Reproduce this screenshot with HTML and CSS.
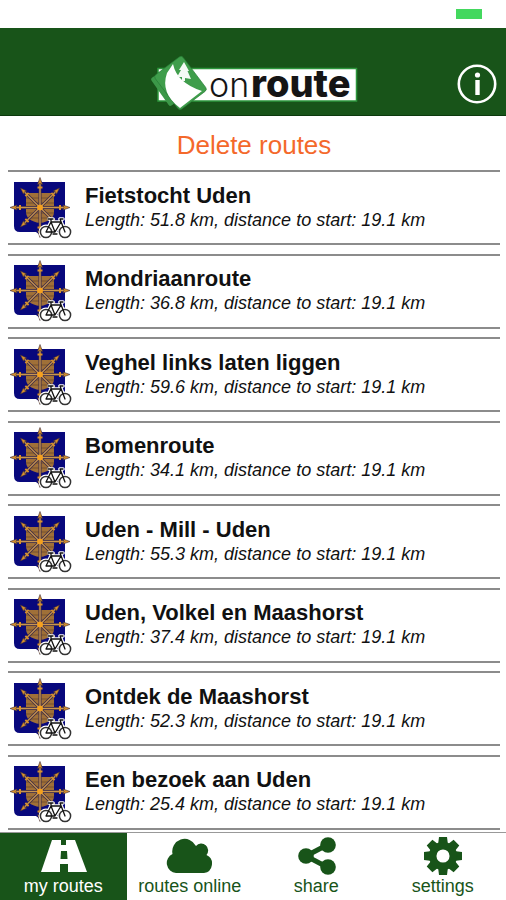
FILE: index.html
```html
<!DOCTYPE html>
<html lang="en">

    <head>
        <meta charset="UTF-8">
        <meta name="viewport" content="width=device-width, initial-scale=1.0">
        <title>My routes</title>

        <link rel="stylesheet" href="styles.css">
    </head>

    <body>
        <!-- shared route icon: coat of arms with a bicycle -->
        <svg class="sprite" width="0" height="0" aria-hidden="true">
            <defs>
                <g id="arrow">
                    <path d="M0 0V-26" stroke="#3a2a48" stroke-width="3"/>
                    <path d="M0 0V-26" stroke="#c9954f" stroke-width="1.4"/>
                    <path d="M0 -30L2.500 -23L0 -24L-2.500 -23Z" fill="#d8912c" stroke="#3a2a3c" stroke-width=".6"/>
                    <path d="M-2.500 -20H2.500" stroke="#d8912c" stroke-width="2"/>
                </g>
                <symbol id="route-icon" viewBox="0 0 66 68">
                    <path d="M6 8H57V54Q57 58 52 58H36L32 61L28 58H12Q6 58 6 52Z" fill="#08087c"/>
                    <path d="M18 19H46V38Q46 47 32 49Q18 47 18 38Z" fill="#a07038"/>
                    <path d="M18 24H46M18 29H46M18 34H46M18 39H46M21 44H43" stroke="#74502f" stroke-width="1"/>
                    <use href="#arrow" transform="translate(32 33.500)"/>
                    <use href="#arrow" transform="translate(32 33.500) rotate(45) scale(.92)"/>
                    <use href="#arrow" transform="translate(32 33.500) rotate(90)"/>
                    <use href="#arrow" transform="translate(32 33.500) rotate(135) scale(.92)"/>
                    <use href="#arrow" transform="translate(32 33.500) rotate(180)"/>
                    <use href="#arrow" transform="translate(32 33.500) rotate(225) scale(.92)"/>
                    <use href="#arrow" transform="translate(32 33.500) rotate(270)"/>
                    <use href="#arrow" transform="translate(32 33.500) rotate(315) scale(.92)"/>
                    <circle cx="32" cy="33.500" r="3" fill="#f5a01e"/>
                    <g fill="none" stroke-linecap="round" stroke-linejoin="round">
                        <g stroke="#fff" stroke-width="3.6">
                            <circle cx="38" cy="58" r="5.600"/>
                            <circle cx="57" cy="58" r="5.600"/>
                            <path d="M38 58L43 48H53L47 58H38M43 48L47 58M57 58L52 45H55M41 45H45M43 45V48"/>
                        </g>
                        <path d="M43 48H53L47 58Z" fill="#fff"/>
                        <circle cx="38" cy="58" r="5.600" fill="#fff" stroke="#333" stroke-width="1.500"/>
                        <circle cx="57" cy="58" r="5.600" fill="#fff" stroke="#333" stroke-width="1.500"/>
                        <path d="M38 58L43 48H53L47 58H38M43 48L47 58M57 58L52 45H55M40 45H45M43 45V48M45 60H49" stroke="#111" stroke-width="1.300"/>
                    </g>
                </symbol>
            </defs>
        </svg>

        <div class="status-bar"><span class="battery"></span></div>

        <header class="header">
            <svg class="logo" viewBox="0 0 210 60" role="img" aria-label="onroute">
                <path d="M10 15.500H208.500V48H10Z" fill="#fff" stroke="#2c963c" stroke-width="1.500"/>
                <rect x="9" y="13" width="34" height="34" rx="2" fill="#3c9848" transform="rotate(-35 26 30)"/>
                <rect x="15" y="8.500" width="35" height="43" rx="3" fill="#3f9d4b" stroke="#247a34" stroke-width=".6" transform="rotate(-37 32.500 30)"/>
                <path d="M19 20L25 11Q29 30 54 38L32 55Q12 40 19 20Z" fill="#fff"/>
                <path d="M36 9L31 17H33L29 24H34V28H37V25L43 26L39.500 18H41Z" fill="#f4faf4"/>
                <text class="logo-on" x="61" y="44">on</text>
                <text class="logo-route" x="103" y="44">route</text>
            </svg>
            <button class="info" type="button" aria-label="Info">
                <svg viewBox="0 0 40 40">
                    <circle cx="20" cy="20" r="18.200" fill="none" stroke="#fff" stroke-width="2.600"/>
                    <circle cx="20.500" cy="11" r="2.600" fill="#fff"/>
                    <path d="M20.500 16V31" stroke="#fff" stroke-width="4.400"/>
                </svg>
            </button>
        </header>

        <main class="content">
            <button class="delete" type="button">Delete routes</button>

            <ul class="routes">
                <li class="route">
                    <svg class="route-icon"><use href="#route-icon"/></svg>
                    <div>
                        <h2>Fietstocht Uden</h2>
                        <p>Length: 51.8 km, distance to start: 19.1 km</p>
                    </div>
                </li>
                <li class="route">
                    <svg class="route-icon"><use href="#route-icon"/></svg>
                    <div>
                        <h2>Mondriaanroute</h2>
                        <p>Length: 36.8 km, distance to start: 19.1 km</p>
                    </div>
                </li>
                <li class="route">
                    <svg class="route-icon"><use href="#route-icon"/></svg>
                    <div>
                        <h2>Veghel links laten liggen</h2>
                        <p>Length: 59.6 km, distance to start: 19.1 km</p>
                    </div>
                </li>
                <li class="route">
                    <svg class="route-icon"><use href="#route-icon"/></svg>
                    <div>
                        <h2>Bomenroute</h2>
                        <p>Length: 34.1 km, distance to start: 19.1 km</p>
                    </div>
                </li>
                <li class="route">
                    <svg class="route-icon"><use href="#route-icon"/></svg>
                    <div>
                        <h2>Uden - Mill - Uden</h2>
                        <p>Length: 55.3 km, distance to start: 19.1 km</p>
                    </div>
                </li>
                <li class="route">
                    <svg class="route-icon"><use href="#route-icon"/></svg>
                    <div>
                        <h2>Uden, Volkel en Maashorst</h2>
                        <p>Length: 37.4 km, distance to start: 19.1 km</p>
                    </div>
                </li>
                <li class="route">
                    <svg class="route-icon"><use href="#route-icon"/></svg>
                    <div>
                        <h2>Ontdek de Maashorst</h2>
                        <p>Length: 52.3 km, distance to start: 19.1 km</p>
                    </div>
                </li>
                <li class="route">
                    <svg class="route-icon"><use href="#route-icon"/></svg>
                    <div>
                        <h2>Een bezoek aan Uden</h2>
                        <p>Length: 25.4 km, distance to start: 19.1 km</p>
                    </div>
                </li>
            </ul>
        </main>

        <nav class="tabs">
            <a class="tab active" href="#my-routes">
                <svg viewBox="0 0 48 40">
                    <path d="M13 4H22V9H27V4H36L48 36H29V28H21V36H2ZM22 15L21.500 23H28.500L28 15Z" fill="currentColor" fill-rule="evenodd"/>
                </svg>
                my routes
            </a>
            <a class="tab" href="#routes-online">
                <svg viewBox="0 0 48 40">
                    <path d="M10 37A10 10 0 0 1 6.500 18A12.500 12.500 0 0 1 30 10A6.800 6.800 0 0 1 40.500 19A9.500 9.500 0 0 1 38 37Z" fill="currentColor"/>
                </svg>
                routes online
            </a>
            <a class="tab" href="#share">
                <svg viewBox="0 0 48 40">
                    <path d="M35 9L14 20L35 31" fill="none" stroke="currentColor" stroke-width="5"/>
                    <circle cx="14" cy="20" r="7.800" fill="currentColor"/>
                    <circle cx="36" cy="9" r="7.800" fill="currentColor"/>
                    <circle cx="36" cy="31" r="7.800" fill="currentColor"/>
                </svg>
                share
            </a>
            <a class="tab" href="#settings">
                <svg viewBox="0 0 48 40">
                    <g transform="translate(24 20)" fill="currentColor">
                        <g id="teeth">
                            <path d="M-4 -19H4L5 -11H-5ZM-4 19H4L5 11H-5Z"/>
                            <path d="M-19 -4V4L-11 5V-5ZM19 -4V4L11 5V-5Z"/>
                        </g>
                        <use href="#teeth" transform="rotate(45)"/>
                        <circle r="10.300" fill="none" stroke="currentColor" stroke-width="7.500"/>
                    </g>
                </svg>
                settings
            </a>
        </nav>
    </body>

</html>
```
FILE: styles.css
```css
* {
    box-sizing: border-box;
}

body {
    display: flex;
    flex-direction: column;
    min-height: 100vh;
    margin: 0;
    font-family: "Liberation Sans", Arial, sans-serif;
    background-color: #fff;
    color: #111;
}

.sprite {
    position: absolute;
}

.status-bar {
    display: flex;
    align-items: center;
    justify-content: flex-end;
    height: 28px;
    padding: 0 24px;
}

.battery {
    width: 26px;
    height: 10px;
    background-color: #43d85e;
}

.header {
    display: grid;
    grid-template-columns: 1fr auto 1fr;
    align-items: end;
    height: 88px;
    padding: 0 9px 2px;
    background-color: #185419;
    border-bottom: 1px solid #0c390d;
}

.logo {
    grid-column: 2;
    width: 210px;
    height: 60px;
}

.logo-on,
.logo-route {
    font-family: Inter, "Liberation Sans", sans-serif;
    fill: #151515;
}

.logo-on {
    font-size: 34px;
    font-weight: 300;
}

.logo-route {
    font-size: 38px;
    font-weight: 800;
}

.info {
    justify-self: end;
    width: 40px;
    height: 40px;
    margin-bottom: 9px;
    padding: 0;
    background: none;
    border: none;
    cursor: pointer;
}

.info svg {
    display: block;
}

.content {
    display: flex;
    flex: 1;
    flex-direction: column;
    padding: 0 6px 2px 8px;
}

.delete {
    height: 54px;
    padding: 5px 0 0;
    background: none;
    border: none;
    color: #f4692b;
    font-family: inherit;
    font-size: 26px;
    cursor: pointer;
}

.routes {
    display: flex;
    flex: 1;
    flex-direction: column;
    justify-content: space-between;
    gap: 8px;
    margin: 0;
    padding: 0;
    list-style: none;
}

.route {
    display: flex;
    align-items: center;
    gap: 11px;
    height: 75px;
    border-top: 2px solid #8c8c8c;
    border-bottom: 2px solid #8c8c8c;
}

.route-icon {
    width: 66px;
    height: 68px;
}

.route h2 {
    margin: 0;
    font-size: 22px;
    line-height: 24px;
}

.route p {
    margin: 0;
    font-size: 18px;
    font-style: italic;
    line-height: 24px;
}

.tabs {
    display: flex;
    height: 68px;
    border-top: 1px solid #999;
}

.tab {
    display: flex;
    flex: 1;
    flex-direction: column;
    align-items: center;
    padding-top: 3px;
    color: #185419;
    font-size: 18px;
    line-height: 20px;
    text-decoration: none;
}

.tab svg {
    width: 48px;
    height: 40px;
}

.tab.active {
    background-color: #185419;
    color: #fff;
}
```
